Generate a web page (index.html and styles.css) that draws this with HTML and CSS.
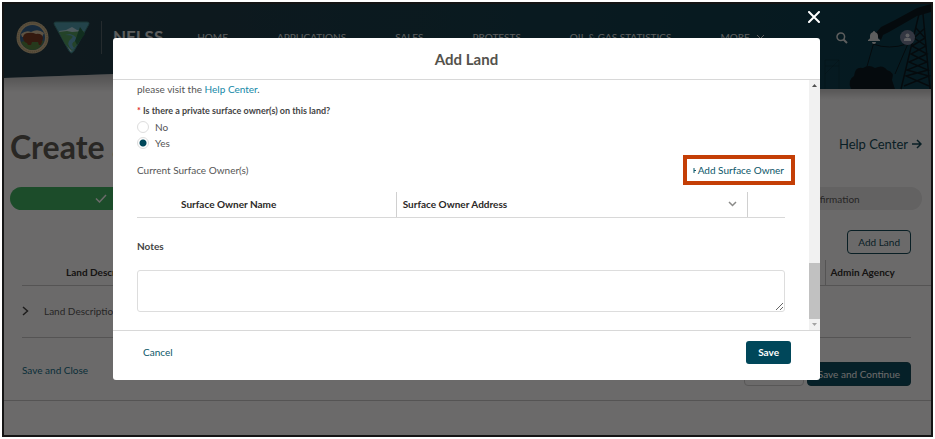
FILE: index.html
```html
<!DOCTYPE html>
<html lang="en">
<head>
<meta charset="utf-8">
<title>NFLSS - Add Land</title>
<link rel="stylesheet" href="styles.css">
</head>
<body>
<div class="frame">
  <header class="site-header">
    <svg class="header-shape" viewBox="0 0 927 100" preserveAspectRatio="none" aria-hidden="true">
      <defs>
        <linearGradient id="hg" x1="0" x2="1"><stop offset="0" stop-color="#1b3541"/><stop offset="1" stop-color="#00394a"/></linearGradient>
        <linearGradient id="sh" x1="0" x2="0" y1="0" y2="1"><stop offset="0" stop-color="#000" stop-opacity=".25"/><stop offset="1" stop-color="#000" stop-opacity="0"/></linearGradient>
      </defs>
      <path d="M0 74L110 70V88H0z" fill="url(#sh)"/>
      <path d="M810 82H927V96H810z" fill="url(#sh)"/>
      <path d="M0 0H927V85H780L400 60L110 70L0 74z" fill="url(#hg)"/>
    </svg>
    <svg class="rig" viewBox="0 0 112 86" aria-hidden="true">
      <g fill="none" stroke="#001017" stroke-width="1.5">
        <path d="M100 10L82 85M104 10L111 85M97 24L106 34L93 42L108 50L90 58L109 66L87 72L110 82M106 24L95 34L107 42L92 50L108 58L88 66L110 72L85 82"/>
        <path d="M55 38L47 66M91 35L76 70M54 40Q70 46 88 40" stroke-width="1"/>
        <path d="M6 85V56H20V85M6 62H20M20 56L6 70" stroke-width="1" opacity=".25"/>
      </g>
      <path d="M62 23L76 16L98 4L112 0V8L98 12L70 28L64 31L62 36L56 30z" fill="#001017"/>
      <path d="M32 85Q28 76 35 72Q36 62 44 64Q50 60 56 64Q64 60 68 66Q76 68 73 76L76 85z" fill="#001017"/>
    </svg>
    <div class="logos">
      <svg width="33" height="33" viewBox="0 0 33 33" aria-hidden="true">
        <circle cx="16.500" cy="16.500" r="16" fill="#d3bd92"/>
        <circle cx="16.500" cy="16.500" r="14.500" fill="none" stroke="#b09061" stroke-dasharray="1 1"/>
        <circle cx="16.500" cy="16.500" r="12.500" fill="#2e5f8c"/>
        <path d="M5 13Q10 9 15 11Q22 7 28 12L26 16H6z" fill="#d9c4a0"/>
        <path d="M5 21Q16 17 28 20Q24 29 16.500 29Q9 29 5 21z" fill="#53843d"/>
        <path d="M7 16Q8 12 12 12Q16 11 20 13Q26 12 27 17L26 21L25 24H23L22 21L16 21L15 24H12L11 22Q7 21 7 16z" fill="#76351c"/>
      </svg>
      <svg width="37" height="33" viewBox="0 0 37 33" aria-hidden="true">
        <path d="M3 1H34Q37 1 35.500 4L21 30Q18.500 34 16 30L1.500 4Q0 1 3 1z" fill="#4b9fb0" stroke="#347a78"/>
        <path d="M6 10L13 9L19 6L24 9L31 10L19 30Q18 31 17 30z" fill="#b4d6e2"/>
        <path d="M6 11L14 10L19 11L31 10L27 19L19 30L12 23z" fill="#4f9d5d"/>
        <path d="M12 14Q23 14 18 18Q12 22 19 29L21 27Q17 22 22 20Q26 16 17 13z" fill="#5ba9c9"/>
        <path d="M27 6L32 13L24 24L22 20z" fill="#1e6944"/>
      </svg>
    </div>
    <span class="brand">NFLSS</span>
    <nav class="nav">
      <a href="#">HOME</a><a href="#">APPLICATIONS</a><a href="#">SALES</a><a href="#">PROTESTS</a><a href="#">OIL &amp; GAS STATISTICS</a>
      <a href="#">MORE <svg width="9" height="6" viewBox="0 0 9 6"><path d="M1 1L4.500 4.500L8 1" fill="none" stroke="currentColor"/></svg></a>
    </nav>
    <div class="tools">
      <button aria-label="Search"><svg width="12" height="12" viewBox="0 0 12 12"><circle cx="4.800" cy="4.800" r="3.800" fill="none" stroke="currentColor" stroke-width="1.500"/><path d="M7.500 7.500L11 11" stroke="currentColor" stroke-width="2"/></svg></button>
      <button aria-label="Notifications"><svg width="12" height="13" viewBox="0 0 12 13"><path d="M6 0Q7 0 7 1Q10 2 10 5V7Q10 8 12 9V10H0V9Q2 8 2 7V5Q2 2 5 1Q5 0 6 0zM4 11H8Q8 13 6 13Q4 13 4 11z" fill="currentColor"/></svg></button>
      <button aria-label="Profile"><svg width="15" height="15" viewBox="0 0 15 15"><circle cx="7.500" cy="7.500" r="7.500" fill="#76819b"/><circle cx="7.500" cy="5.500" r="2" fill="#e0e4ea"/><path d="M4 11V9.500Q4 8 6 8H9Q11 8 11 9.500V11z" fill="#e0e4ea"/></svg></button>
    </div>
  </header>
  <main class="page">
    <div class="title-row">
      <h1>Create a</h1>
      <a class="help" href="#">Help Center <svg width="10" height="10" viewBox="0 0 10 10"><path d="M0 5H9M5 1L9 5L5 9" fill="none" stroke="currentColor" stroke-width="1.500"/></svg></a>
    </div>
    <ol class="steps">
      <li class="done"><svg width="12" height="9" viewBox="0 0 12 9"><path d="M1 4.500L4.500 8L11 1" fill="none" stroke="#fff" stroke-width="1.500"/></svg></li>
      <li></li><li></li><li></li><li>Confirmation</li>
    </ol>
    <div class="add-row"><button class="btn outline">Add Land</button></div>
    <table class="lands">
      <thead><tr><th class="c-toggle"></th><th>Land Description</th><th class="c-agency">Admin Agency</th><th class="c-edge"></th></tr></thead>
      <tbody><tr><td><svg width="7" height="10" viewBox="0 0 7 10"><path d="M1 1L5.500 5L1 9" fill="none" stroke="#3e3e3c" stroke-width="1.500"/></svg></td><td class="desc">Land Description</td><td></td><td class="edge"></td></tr></tbody>
    </table>
    <div class="page-actions">
      <a href="#">Save and Close</a>
      <button class="btn plain">Previous</button>
      <button class="btn solid">Save and Continue</button>
    </div>
  </main>
  <div class="overlay">
    <section class="modal" role="dialog" aria-modal="true" aria-labelledby="modal-title">
      <button class="close" aria-label="Close"><svg width="12" height="12" viewBox="0 0 12 12"><path d="M1 1L11 11M11 1L1 11" stroke="#fff" stroke-width="2" stroke-linecap="round"/></svg></button>
      <h2 id="modal-title">Add Land</h2>
      <div class="modal-body">
        <div class="content">
          <p class="intro">please visit the <a href="#">Help Center</a>.</p>
          <fieldset>
            <legend><span class="req">*</span> Is there a private surface owner(s) on this land?</legend>
            <label><input type="radio" name="owner"> No</label>
            <label><input type="radio" name="owner" checked> Yes</label>
          </fieldset>
          <div class="owners-row">
            <span>Current Surface Owner(s)</span>
            <button class="add-owner"><svg width="5" height="7" viewBox="0 0 5 7"><path d="M2 1V6M2 3.500H4" stroke="currentColor" fill="none"/></svg>Add Surface Owner</button>
          </div>
          <table class="owners">
            <thead><tr><th class="o-name">Surface Owner Name</th><th class="o-address"><span class="th-inner">Surface Owner Address <svg width="9" height="6" viewBox="0 0 9 6"><path d="M1 1L4.500 4.500L8 1" fill="none" stroke="#8a8a88" stroke-width="1.500"/></svg></span></th><th class="o-end"></th></tr></thead>
          </table>
          <label class="notes-label" for="notes">Notes</label>
          <textarea id="notes"></textarea>
        </div>
        <div class="scrollbar" aria-hidden="true">
          <svg width="11" height="11" viewBox="0 0 11 11"><path d="M3 7L5.500 4L8 7z" fill="#505050"/></svg>
          <span class="thumb"></span>
          <svg width="11" height="11" viewBox="0 0 11 11"><path d="M3 4L5.500 7L8 4z" fill="#a3a3a3"/></svg>
        </div>
      </div>
      <footer class="modal-footer">
        <button class="cancel">Cancel</button>
        <button class="save">Save</button>
      </footer>
    </section>
  </div>
</div>
</body>
</html>
```
FILE: styles.css
```css
* { box-sizing: border-box; }
body { margin: 0; padding: 2px; background: #fff; font: 10px/16px Lato, sans-serif; color: #555; }
button { font: inherit; color: inherit; background: none; border: 0; padding: 0; cursor: pointer; }
a { color: #0b6b86; text-decoration: none; }
svg { display: block; flex: none; }
h1, h2, p, ol { margin: 0; }
table { border-collapse: collapse; width: 100%; table-layout: fixed; }
th, td { padding: 0; text-align: left; }

.frame { position: relative; border: 2px solid #141414; overflow: hidden; }

.site-header { position: relative; display: flex; align-items: center; height: 85px; padding: 0 16px 18px 12px; color: #dde0e0; }
.header-shape { position: absolute; left: 0; top: 0; width: 100%; height: 100px; }
.rig { position: absolute; right: 0; top: 0; width: 112px; height: 86px; }
.logos, .brand, .nav, .tools { position: relative; display: flex; align-items: center; }
.logos { gap: 4px; padding-right: 11px; border-right: 1px solid #50626a; }
.brand { margin-left: 11px; padding-bottom: 2px; font-size: 17px; font-weight: 700; line-height: 20px; }
.nav { gap: 49px; margin-left: 34px; padding-bottom: 2px; }
.nav a { display: flex; align-items: center; gap: 6px; color: inherit; white-space: nowrap; }
.tools { margin-left: auto; gap: 20px; }

.page { padding-bottom: 34px; }
.title-row { display: flex; justify-content: space-between; align-items: center; margin-top: 38px; padding: 0 9px 0 6px; }
h1 { font-size: 32px; line-height: 40px; color: #5a5850; }
.help { display: flex; align-items: center; gap: 4px; margin-bottom: 6px; font-size: 13px; color: #0a4453; }
.steps { display: flex; list-style: none; margin: 20px 9px 0 6px; padding: 0; border-radius: 12px; overflow: hidden; background: #eaeaea; height: 23px; }
.steps li { flex: 1; display: flex; align-items: center; justify-content: center; }
.steps .done { background: #3bb55f; }
.add-row { display: flex; justify-content: flex-end; margin: 20px 20px 6px 0; }
.btn { height: 24px; border: 1px solid #0a4453; border-radius: 4px; padding: 0 10px; }
.outline { color: #0a4453; }
.plain { border-color: #d0d0d0; margin-left: auto; }
.solid { background: #00475a; color: #fff; }
.lands { margin-left: 18px; width: calc(100% - 18px); }
.lands th { height: 25px; border-bottom: 1px solid #c9c9c9; color: #2b2826; }
.lands th:nth-child(2) { padding-left: 22px; }
.c-toggle { width: 22px; }
.c-agency { width: 86px; border-left: 1px solid #c9c9c9; }
.lands .c-agency { padding-left: 5px; }
.c-edge { width: 20px; }
.lands td { height: 52px; border-bottom: 1px solid #c9c9c9; }
.lands .edge { border-bottom: 0; }
.page-actions { display: flex; align-items: flex-start; gap: 3px; padding: 24px 20px 14px 18px; border-bottom: 1px solid #c9c9c9; }

.overlay { position: absolute; inset: 0; padding: 34px 111px 0 109px; background: rgba(8, 7, 7, .6); }
.modal { position: relative; background: #fff; border-radius: 3px; }
.close { position: absolute; right: 0; top: -27px; }
h2 { padding: 12px 0 11px; text-align: center; font-size: 15px; line-height: 18px; color: #54524c; border-bottom: 1px solid #d8d8d8; }
.modal-body { display: flex; }
.content { flex: 1; padding: 0 24px 18px; }
.intro { padding-top: 1px; }
.intro a { color: #1589a8; }
fieldset { border: 0; margin: 6px 0 0; padding: 0; }
legend { padding: 0; font-size: 9px; font-weight: 700; color: #444; }
.req { color: #e02a2a; }
fieldset label { display: flex; align-items: center; gap: 6px; }
input[type=radio] { appearance: none; width: 12px; height: 12px; margin: 0; border: 1px solid #ddd; border-radius: 50%; }
input[type=radio]:checked { background: radial-gradient(circle, #00475a 0 3px, #fff 4px); }
.owners-row { display: flex; align-items: center; justify-content: space-between; height: 30px; margin: 4px 0 7px; }
.add-owner { display: flex; align-items: center; gap: 1px; height: 30px; margin-right: -10px; padding: 0 7px 0 5px; border: 4px solid #c43e06; color: #0b5668; }
.owners th { height: 25px; border-bottom: 1px solid #d8d8d8; color: #2b2826; }
.owners .o-name { width: 40%; padding-left: 44px; }
.owners .o-address { border-left: 1px solid #d0d0d0; padding-left: 6px; }
.th-inner { display: flex; justify-content: space-between; align-items: center; padding-right: 10px; }
.o-end { width: 38px; border-left: 1px solid #d0d0d0; }
.notes-label { display: block; margin: 20px 0 16px; font-weight: 700; color: #444; }
textarea { display: block; width: 100%; height: 42px; border: 1px solid #ddd; border-radius: 3px; background: #fff; font: inherit; resize: vertical; }
.scrollbar { width: 11px; display: flex; flex-direction: column; background: #f1f1f1; }
.thumb { height: 56px; margin-top: auto; background: #c1c1c1; }
.modal-footer { display: flex; justify-content: space-between; align-items: center; padding: 10px 29px 16px 30px; border-top: 1px solid #d8d8d8; }
.cancel { color: #0b5668; }
.save { height: 23px; padding: 0 12px; border-radius: 3px; background: #00475a; color: #fff; font-weight: 700; }
```
